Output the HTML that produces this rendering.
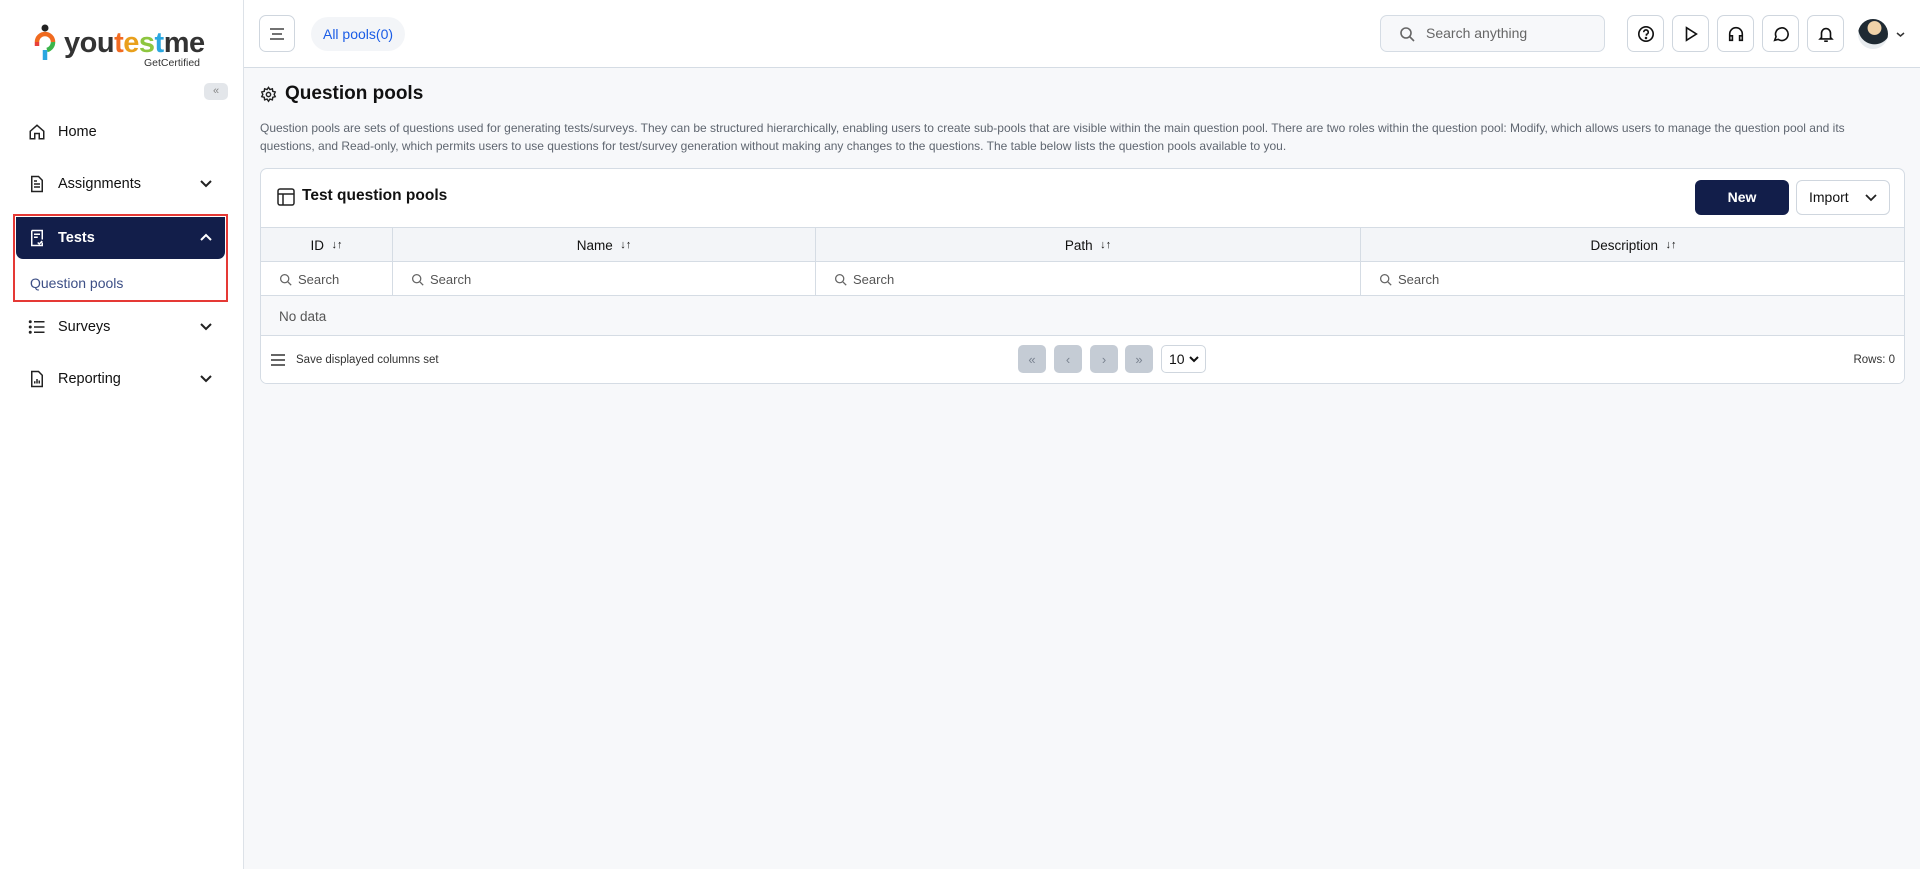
<!DOCTYPE html>
<html><head><meta charset="utf-8"><style>
*{box-sizing:border-box;margin:0;padding:0}
body{width:1920px;height:869px;overflow:hidden;font-family:"Liberation Sans",sans-serif;background:#f7f8fa;color:#111;position:relative}
.abs{position:absolute}
.sb{left:0;top:0;width:244px;height:869px;background:#fff;border-right:1px solid #dde2e8}
.nav{position:absolute;left:28px;font-size:14.5px;color:#111;display:flex;align-items:center;gap:12px}
.chev{position:absolute;left:199px}
.hdr{left:244px;top:0;right:0;height:68px;background:#fff;border-bottom:1px solid #d5dce4}
.ib{position:absolute;top:15px;width:37px;height:37px;border:1px solid #cfd6de;border-radius:7px;background:#fff;display:flex;align-items:center;justify-content:center}
.card{left:260px;top:168px;width:1645px;height:216px;background:#fff;border:1px solid #d5dce4;border-radius:7px;overflow:hidden}
.row{position:absolute;left:0;right:0;border-top:1px solid #d5dce4}
.cell{position:absolute;top:0;bottom:0;border-right:1px solid #d5dce4;display:flex;align-items:center}
.srch{font-size:13px;color:#555;gap:6px;padding-left:18px}
.pg{position:absolute;top:176px;width:28px;height:28px;background:#c5ccd5;border-radius:5px;color:#7a8390;font-size:13px;display:flex;align-items:center;justify-content:center}
</style></head><body>
<div class="abs sb">
 <div class="abs" style="left:34px;top:24px">
  <svg width="22" height="46" viewBox="0 0 22 46"><circle cx="11" cy="4" r="3.5" fill="#222"/><path d="M3 18a8 8 0 0 1 16 0" stroke="#f06a1f" stroke-width="4.5" fill="none"/><path d="M19 18a8 8 0 0 1-6 8" stroke="#3bb54a" stroke-width="4.5" fill="none"/><path d="M11 26v10" stroke="#2aa7e0" stroke-width="4.5"/><path d="M3 18v4" stroke="#e8403b" stroke-width="4.5"/></svg>
 </div>
 <div class="abs" style="left:64px;top:27px;font-size:29px;font-weight:bold;letter-spacing:-0.5px;color:#333">you<span style="color:#f26b21">t</span><span style="color:#e9a01c">e</span><span style="color:#8dc63f">s</span><span style="color:#2aa7e0">t</span>me</div>
 <div class="abs" style="left:144px;top:57px;font-size:10.5px;color:#333">GetCertified</div>
 <div class="abs" style="left:204px;top:83px;width:24px;height:17px;background:#e3e6ea;border-radius:5px;font-size:11px;color:#888;text-align:center;line-height:16px">«</div>
 <div class="nav" style="top:123px"><svg width="18" height="18" viewBox="0 0 24 24" fill="none" stroke="#222" stroke-width="2"><path d="M3 11l9-8 9 8v10h-6v-7H9v7H3z"/></svg>Home</div>
 <div class="nav" style="top:175px"><svg width="18" height="18" viewBox="0 0 24 24" fill="none" stroke="#222" stroke-width="2"><path d="M5 2h9l5 5v15H5z M8 12h8M8 16h8M8 8h4"/></svg>Assignments</div>
 <svg class="chev" style="top:177px" width="14" height="14" viewBox="0 0 14 14" fill="none" stroke="#222" stroke-width="2"><path d="M2 4l5 5 5-5"/></svg>
 <div class="abs" style="left:13px;top:214px;width:215px;height:88px;border:2px solid #e53935"></div>
 <div class="abs" style="left:16px;top:217px;width:209px;height:42px;background:#121e4a;border-radius:0 0 7px 7px"></div>
 <div class="nav" style="top:229px;color:#fff;font-weight:bold"><svg width="18" height="18" viewBox="0 0 24 24" fill="none" stroke="#fff" stroke-width="2"><path d="M5 2h14v12M19 18v4H5V2M8 7h8M8 11h5M13 18l2 2 4-4"/></svg>Tests</div>
 <svg class="chev" style="top:230px" width="14" height="14" viewBox="0 0 14 14" fill="none" stroke="#fff" stroke-width="2"><path d="M2 10l5-5 5 5"/></svg>
 <div class="abs" style="left:30px;top:275px;font-size:14px;color:#3d4f86">Question pools</div>
 <div class="nav" style="top:318px"><svg width="18" height="18" viewBox="0 0 24 24" fill="#222"><circle cx="3" cy="5" r="2"/><circle cx="3" cy="12" r="2"/><circle cx="3" cy="19" r="2"/><rect x="8" y="4" width="14" height="2"/><rect x="8" y="11" width="14" height="2"/><rect x="8" y="18" width="14" height="2"/></svg>Surveys</div>
 <svg class="chev" style="top:320px" width="14" height="14" viewBox="0 0 14 14" fill="none" stroke="#222" stroke-width="2"><path d="M2 4l5 5 5-5"/></svg>
 <div class="nav" style="top:370px"><svg width="18" height="18" viewBox="0 0 24 24" fill="none" stroke="#222" stroke-width="2"><path d="M5 2h9l5 5v15H5z M9 18v-3M12 18v-6M15 18v-4"/></svg>Reporting</div>
 <svg class="chev" style="top:372px" width="14" height="14" viewBox="0 0 14 14" fill="none" stroke="#222" stroke-width="2"><path d="M2 4l5 5 5-5"/></svg>
</div>
<div class="abs hdr">
 <div class="ib" style="left:15px;width:36px"><svg width="16" height="14" viewBox="0 0 16 14" stroke="#444" stroke-width="1.6"><path d="M1 2h14M3 7h10M1 12h14"/></svg></div>
 <div class="abs" style="left:67px;top:17px;width:94px;height:34px;background:#f3f5f8;border-radius:17px;font-size:14px;color:#1a5ce6;line-height:34px;text-align:center">All pools(0)</div>
 <div class="abs" style="left:1136px;top:15px;width:225px;height:37px;background:#f7f8fa;border:1px solid #d5dce4;border-radius:7px;font-size:14px;color:#666;line-height:35px;padding-left:45px">Search anything
  <svg class="abs" style="left:18px;top:10px" width="16" height="16" viewBox="0 0 16 16" fill="none" stroke="#666" stroke-width="1.6"><circle cx="7" cy="7" r="5"/><path d="M11 11l4 4"/></svg></div>
 <div class="ib" style="left:1383px"><svg width="18" height="18" viewBox="0 0 20 20" fill="none" stroke="#111" stroke-width="1.8"><circle cx="10" cy="10" r="8"/><path d="M7.5 8a2.5 2.5 0 1 1 3 2.4V12"/><circle cx="10" cy="14.5" r=".5" fill="#111"/></svg></div>
 <div class="ib" style="left:1428px"><svg width="18" height="18" viewBox="0 0 20 20" fill="none" stroke="#111" stroke-width="1.8"><path d="M5 3l11 7-11 7z"/></svg></div>
 <div class="ib" style="left:1473px"><svg width="18" height="18" viewBox="0 0 20 20" fill="none" stroke="#111" stroke-width="1.8"><path d="M3 14v-4a7 7 0 0 1 14 0v4M3 12h3v5H3zM14 12h3v5h-3z"/></svg></div>
 <div class="ib" style="left:1518px"><svg width="18" height="18" viewBox="0 0 20 20" fill="none" stroke="#111" stroke-width="1.8"><path d="M3 17l1.5-4A7 7 0 1 1 7 16z"/></svg></div>
 <div class="ib" style="left:1563px"><svg width="18" height="18" viewBox="0 0 20 20" fill="none" stroke="#111" stroke-width="1.8"><path d="M5 14V9a5 5 0 0 1 10 0v5l1.5 1.5h-13zM8 18h4"/></svg></div>
 <div class="abs" style="left:1614px;top:19px;width:30px;height:30px;border-radius:50%;background:radial-gradient(circle at 55% 30%,#f0d2a8 0 25%,#1f2a33 27% 60%,#e8ecef 62%)"></div>
 <svg class="abs" style="left:1652px;top:31px" width="9" height="7" viewBox="0 0 9 7" fill="none" stroke="#333" stroke-width="1.5"><path d="M1 2l3.5 3L8 2"/></svg>
</div>
<svg class="abs" style="left:260px;top:86px" width="17" height="17" viewBox="0 0 24 24" fill="none" stroke="#222" stroke-width="2"><circle cx="12" cy="12" r="3"/><path d="M12 2l2 3 3.5-1 .5 3.5 3.5 1-1.5 3.5 1.5 3-3.5 1-.5 3.5-3.5-1-2 3-2-3-3.5 1-.5-3.5-3.5-1 1.5-3-1.5-3.5 3.5-1L6.5 4 10 5z"/></svg>
<div class="abs" style="left:285px;top:83px;font-size:19px;font-weight:bold">Question pools</div>
<div class="abs" style="left:260px;top:119px;width:1600px;font-size:12px;line-height:18px;color:#5f6670">Question pools are sets of questions used for generating tests/surveys. They can be structured hierarchically, enabling users to create sub-pools that are visible within the main question pool. There are two roles within the question pool: Modify, which allows users to manage the question pool and its questions, and Read-only, which permits users to use questions for test/survey generation without making any changes to the questions. The table below lists the question pools available to you.</div>
<div class="abs card">
 <svg class="abs" style="left:16px;top:19px" width="18" height="18" viewBox="0 0 18 18" fill="none" stroke="#222" stroke-width="1.5"><rect x="1" y="1" width="16" height="16" rx="2"/><path d="M1 6h16M6 6v11"/></svg>
 <div class="abs" style="left:41px;top:18px;font-size:15.5px;font-weight:bold">Test question pools</div>
 <div class="abs" style="left:1434px;top:11px;width:94px;height:35px;background:#121e4a;border-radius:6px;color:#fff;font-size:14px;font-weight:bold;text-align:center;line-height:35px">New</div>
 <div class="abs" style="left:1535px;top:11px;width:94px;height:35px;border:1px solid #cfd6de;border-radius:6px;font-size:14px;line-height:33px;padding-left:12px">Import<svg class="abs" style="left:68px;top:12px" width="12" height="9" viewBox="0 0 12 9" fill="none" stroke="#222" stroke-width="1.8"><path d="M1 2l5 5 5-5"/></svg></div>
 <div class="row" style="top:58px;height:35px;background:#f3f5f8;font-size:13.5px">
  <div class="cell" style="left:0;width:132px;justify-content:center">ID&nbsp;&nbsp;<span style="font-size:11px">↓↑</span></div>
  <div class="cell" style="left:132px;width:423px;justify-content:center">Name&nbsp;&nbsp;<span style="font-size:11px">↓↑</span></div>
  <div class="cell" style="left:555px;width:545px;justify-content:center">Path&nbsp;&nbsp;<span style="font-size:11px">↓↑</span></div>
  <div class="cell" style="left:1100px;width:545px;justify-content:center;border-right:0">Description&nbsp;&nbsp;<span style="font-size:11px">↓↑</span></div>
 </div>
 <div class="row" style="top:92px;height:35px">
  <div class="cell srch" style="left:0;width:132px"><svg width="13" height="13" viewBox="0 0 16 16" fill="none" stroke="#666" stroke-width="1.6"><circle cx="7" cy="7" r="5"/><path d="M11 11l4 4"/></svg>Search</div>
  <div class="cell srch" style="left:132px;width:423px"><svg width="13" height="13" viewBox="0 0 16 16" fill="none" stroke="#666" stroke-width="1.6"><circle cx="7" cy="7" r="5"/><path d="M11 11l4 4"/></svg>Search</div>
  <div class="cell srch" style="left:555px;width:545px"><svg width="13" height="13" viewBox="0 0 16 16" fill="none" stroke="#666" stroke-width="1.6"><circle cx="7" cy="7" r="5"/><path d="M11 11l4 4"/></svg>Search</div>
  <div class="cell srch" style="left:1100px;width:545px;border-right:0"><svg width="13" height="13" viewBox="0 0 16 16" fill="none" stroke="#666" stroke-width="1.6"><circle cx="7" cy="7" r="5"/><path d="M11 11l4 4"/></svg>Search</div>
 </div>
 <div class="row" style="top:126px;height:41px;background:#f7f8fa;font-size:13.5px;color:#555;padding:13px 0 0 18px">No data</div>
 <div class="row" style="top:166px;height:50px;background:#fff">
  <svg class="abs" style="left:10px;top:18px" width="14" height="12" viewBox="0 0 14 12" stroke="#333" stroke-width="1.5"><path d="M0 1h14M0 6h14M0 11h14"/></svg>
  <div class="abs" style="left:35px;top:18px;font-size:11.5px;color:#333">Save displayed columns set</div>
  <div class="abs" style="right:9px;top:18px;font-size:11.5px;color:#333">Rows: 0</div>
 </div>
 <div class="pg" style="left:757px">«</div><div class="pg" style="left:793px">‹</div><div class="pg" style="left:829px">›</div><div class="pg" style="left:864px">»</div>
 <div class="abs" style="left:900px;top:176px;width:45px;height:28px;border:1px solid #cfd6de;border-radius:5px;font-size:14px;line-height:26px;padding-left:7px">10<svg class="abs" style="left:27px;top:10px" width="10" height="7" viewBox="0 0 10 7" fill="none" stroke="#111" stroke-width="2"><path d="M1 1l4 4 4-4"/></svg></div>
</div>
</body></html>
